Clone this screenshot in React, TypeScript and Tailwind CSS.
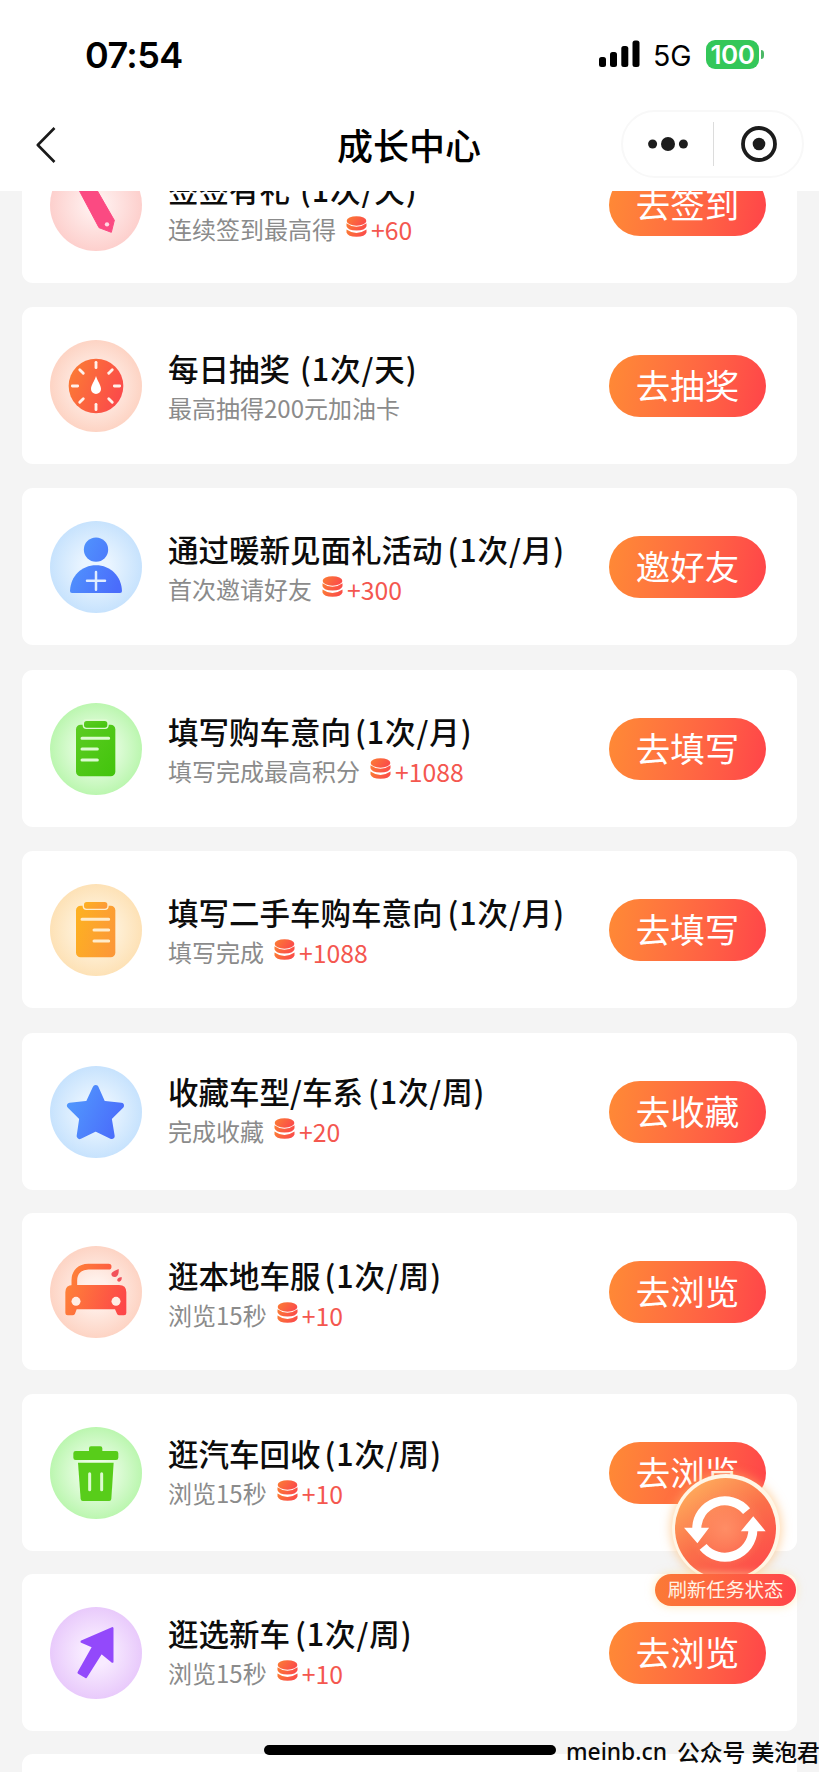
import {ReactNode} from "react";

type Task = {
	icon: ReactNode;
	tint: string;
	name: string;
	freq: string;
	desc: string;
	points?: string;
	action: string;
	gap: string;
	freqGap?: string;
	lift?: string;
};

const PenIcon = () => (
	<g>
		<path d="M64 50 H116 L193 184 L184 220 L147 206 Z" fill="#fb4a82" stroke="#fb4a82" strokeWidth="3" strokeLinejoin="round"/>
		<circle cx="171" cy="196" r="6.5" fill="#ffd9e3"/>
	</g>
);

const DialIcon = () => (
	<g>
		<circle cx="138" cy="138" r="82" fill="url(#warm)"/>
		{[0, 45, 90, 135, 180, 225, 270, 315].map((angle) => (
			<path key={angle} d={angle % 90 ? "M138 69 V84" : "M138 67 V83"} transform={`rotate(${angle} 138 138)`}
						stroke="#fff1ea" strokeWidth="8.5" strokeLinecap="round"/>
		))}
		<path d="M138 108 C142 122 153 136 153 147 A15 15 0 0 1 123 147 C123 136 134 122 138 108 Z" fill="#fff"/>
	</g>
);

const InviteIcon = () => (
	<g>
		<circle cx="138" cy="86" r="36.5" fill="url(#cool)"/>
		<path d="M66 216 Q60 216 60 210 C62 165 95 133 138 133 C181 133 214 165 216 210 Q216 216 210 216 Z" fill="url(#cool)"/>
		<path d="M138 153 V206 M111 179.500 H165" stroke="#e0ecff" strokeWidth="7.5" strokeLinecap="round"/>
	</g>
);

const FormIcon = ({fill, halo, right}: { fill: string, halo: string, right?: boolean }) => (
	<g>
		<rect x="78" y="65" width="118" height="155" rx="14" fill={fill}/>
		<rect x="98" y="48" width="78" height="30" rx="11" fill={halo}/>
		<rect x="102" y="54" width="70" height="20" rx="8" fill={fill}/>
		<path d={right ? "M96 106 H176 M132 138 H176 M132 171 H176" : "M96 106 H176 M96 138 H142 M96 171 H142"}
					stroke={halo} strokeWidth="9" strokeLinecap="round"/>
	</g>
);

const StarIcon = () => (
	<path d="M137 66 L158 113 L213 119 L176 156 L185 210 L137 187 L89 210 L97 156 L60 119 L115 113 Z"
				fill="url(#cool)" stroke="url(#cool)" strokeWidth="18" strokeLinejoin="round"/>
);

const CarIcon = () => (
	<g>
		<path d="M73 122 V103 C73 78 90 62 115 62 H176" fill="none" stroke="url(#car)" strokeWidth="17" strokeLinecap="round"/>
		<path d="M68 117 H207 Q229 117 229 139 V201 Q229 208 222 208 H208 Q203 208 201 203 L195 190 H80 L75 203 Q73 208 67 208 H53 Q46 208 46 201 V139 Q46 117 68 117 Z"
					fill="url(#car)"/>
		<circle cx="78" cy="166" r="13.500" fill="#ffeee6"/>
		<circle cx="198" cy="166" r="13.500" fill="#ffeee6"/>
		<path d="M206 69 C207 80 205 91 196 93 C187 94 182 88 185 81 C188 76 197 73 206 69 Z" fill="#f2525b"/>
		<path d="M215 93 C216 100 214 106 208 107 C202 107 200 102 203 98 C206 95 211 94 215 93 Z" fill="#f2525b"/>
	</g>
);

const TrashIcon = () => (
	<g fill="#58cd1a">
		<path d="M117 72 V64 Q117 58 123 58 H151 Q157 58 157 64 V72 H198 Q205 72 205 79 V92 Q205 99 198 99 H77 Q70 99 70 92 V79 Q70 72 77 72 Z"/>
		<path d="M84 107 H191 L184 216 Q183 222 178 222 H98 Q93 222 92 216 Z"/>
		<path d="M119 140 V188 M155 140 V188" stroke="#dcfbd0" strokeWidth="9" strokeLinecap="round"/>
	</g>
);

const ArrowIcon = () => (
	<path d="M187 64 V164 L154 137 L108 210 L86 197 L130 119 L95 104 Z" fill="#9349fb" stroke="#9349fb" strokeWidth="7"
				strokeLinejoin="round"/>
);

const tasks: Task[] = [
	{
		icon: <PenIcon/>, tint: "bg-[radial-gradient(circle,#fff0ef_10%,#fdcfcc_72%)]", name: "签签有礼", freq: "(1次/天)",
		desc: "连续签到最高得", points: "+60", action: "去签到", gap: "-mt-[65px]", freqGap: "ml-[10px]", lift: "pb-[46px]"
	},
	{
		icon: <DialIcon/>, tint: "bg-[radial-gradient(circle,#fff0ea_20%,#fdd3c3_72%)]", name: "每日抽奖", freq: "(1次/天)",
		desc: "最高抽得200元加油卡", action: "去抽奖", gap: "mt-[24px]", freqGap: "ml-[10px]"
	},
	{
		icon: <InviteIcon/>, tint: "bg-[radial-gradient(circle,#eaf5ff_20%,#c6e2fd_72%)]", name: "通过暖新见面礼活动", freq: "(1次/月)",
		desc: "首次邀请好友", points: "+300", action: "邀好友", gap: "mt-[24px]", freqGap: "ml-[5px]"
	},
	{
		icon: <FormIcon fill="url(#leaf)" halo="#dcfbd0"/>, tint: "bg-[radial-gradient(circle,#eafde5_20%,#baf6ae_72%)]",
		name: "填写购车意向", freq: "(1次/月)", desc: "填写完成最高积分", points: "+1088", action: "去填写", gap: "mt-[25px]"
	},
	{
		icon: <FormIcon fill="url(#amber)" halo="#ffeccb" right/>, tint: "bg-[radial-gradient(circle,#fff4e0_20%,#fde1b5_72%)]",
		name: "填写二手车购车意向", freq: "(1次/月)", desc: "填写完成", points: "+1088", action: "去填写", gap: "mt-[24px]",
		freqGap: "ml-[5px]"
	},
	{
		icon: <StarIcon/>, tint: "bg-[radial-gradient(circle,#eaf5ff_20%,#c6e2fd_72%)]", name: "收藏车型/车系", freq: "(1次/周)",
		desc: "完成收藏", points: "+20", action: "去收藏", gap: "mt-[25px]", freqGap: "ml-[5px]", lift: "pb-[51px]"
	},
	{
		icon: <CarIcon/>, tint: "bg-[radial-gradient(circle,#fff0ea_20%,#fdd3c3_72%)]", name: "逛本地车服", freq: "(1次/周)",
		desc: "浏览15秒", points: "+10", action: "去浏览", gap: "mt-[23px]", lift: "pb-[47px]"
	},
	{
		icon: <TrashIcon/>, tint: "bg-[radial-gradient(circle,#eafde5_20%,#baf6ae_72%)]", name: "逛汽车回收", freq: "(1次/周)",
		desc: "浏览15秒", points: "+10", action: "去浏览", gap: "mt-[24px]", lift: "pb-[50px]"
	},
	{
		icon: <ArrowIcon/>, tint: "bg-[radial-gradient(circle,#f8ebff_20%,#e8c9fb_72%)]", name: "逛选新车", freq: "(1次/周)",
		desc: "浏览15秒", points: "+10", action: "去浏览", gap: "mt-[23px]", freqGap: "ml-[5px]", lift: "pb-[50px]"
	},
];

const Gradients = () => (
	<svg className="absolute size-0" aria-hidden="true">
		<defs>
			<linearGradient id="warm" x1="0" y1="0.3" x2="1" y2="0.7">
				<stop stopColor="#fb7a35"/>
				<stop offset="1" stopColor="#fb484b"/>
			</linearGradient>
			<linearGradient id="car" gradientUnits="userSpaceOnUse" x1="46" y1="110" x2="229" y2="170">
				<stop stopColor="#fe8338"/>
				<stop offset="1" stopColor="#fd4649"/>
			</linearGradient>
			<linearGradient id="cool" gradientUnits="userSpaceOnUse" x1="60" y1="100" x2="216" y2="170">
				<stop stopColor="#5197fd"/>
				<stop offset="1" stopColor="#4a6cfb"/>
			</linearGradient>
			<linearGradient id="leaf" x1="0" y1="0" x2="1" y2="1">
				<stop stopColor="#5ccc22"/>
				<stop offset="1" stopColor="#42c40c"/>
			</linearGradient>
			<linearGradient id="amber" x1="0" y1="0.3" x2="1" y2="0.7">
				<stop stopColor="#fdb022"/>
				<stop offset="1" stopColor="#fc9838"/>
			</linearGradient>
		</defs>
	</svg>
);

const Coins = () => (
	<svg viewBox="0 0 63 64" className="w-[21px] h-[21px] shrink-0 mb-[6px] ml-[10px] mr-[4px]">
		<ellipse cx="31.500" cy="15" rx="30" ry="14.500" fill="url(#warm)"/>
		<path d="M1 22 Q31 44 62 22 V31 Q58 44 31.500 44 Q5 44 1 31 Z" fill="url(#warm)"/>
		<path d="M1 41 Q31 62 62 41 V50 Q58 63 31.500 63 Q5 63 1 50 Z" fill="url(#warm)"/>
	</svg>
);

function TaskCard({icon, tint, name, freq, desc, points, action, gap, freqGap = "ml-[4px]", lift = "pb-[48px]"}: Task) {
	return (
		<li className={`flex h-[157px] w-[775px] shrink-0 rounded-[11px] bg-white pl-[28px] pr-[31px] ${gap}`}>
			<div className={`size-[92px] shrink-0 self-center rounded-full ${tint}`}>
				<svg viewBox="0 0 276 276" className="size-full">{icon}</svg>
			</div>
			<div className={`ml-[26px] flex flex-1 flex-col justify-end whitespace-nowrap ${lift}`}>
				<div className="flex h-[40px] items-center text-[30.500px] font-medium leading-[40px] text-[#0c0c0c]">
					<span>{name}</span>
					<span className={`tracking-[0.9px] ${freqGap}`}>{freq}</span>
				</div>
				<div className="flex h-[40px] items-center -mb-[12px] text-[24px] leading-[40px] text-[#8b8b8b]">
					<span>{desc}</span>
					{points && (
						<>
							<Coins/>
							<span className="text-[24.800px] text-[#f4574f]">{points}</span>
						</>
					)}
				</div>
			</div>
			<button className="h-[62px] w-[157px] shrink-0 self-center rounded-full bg-linear-100 from-[#ff8a35] to-[#ff4349] pb-[4px] text-[34.500px] leading-[58px] text-white">
				{action}
			</button>
		</li>
	);
}

const StatusBar = () => (
	<div className="flex h-[110px] items-start pl-[85px] pt-[34px] font-['Inter',sans-serif]">
		<div className="w-[514px] text-[36px] font-semibold leading-[42px] tracking-[-0.600px] text-black">07:54</div>
		<svg viewBox="0 0 41 28" className="mt-[6px] h-[28px] w-[41px]">
			<rect x="0" y="17" width="7" height="10" rx="2.500"/>
			<rect x="11" y="12" width="7" height="15" rx="2.500"/>
			<rect x="22.300" y="6" width="7" height="21" rx="2.500"/>
			<rect x="33.500" y="0.500" width="7" height="26.500" rx="2.500"/>
		</svg>
		<div className="ml-[13px] w-[53px] text-[28.500px] leading-[44px] text-black">5G</div>
		<div className="mt-[6px] flex h-[29px] w-[53px] items-center justify-center rounded-[9px] bg-[#34c759] text-[26px] font-semibold leading-[29px] tracking-[-0.500px] text-white">
			100
		</div>
		<div className="ml-[2px] mt-[16px] h-[9px] w-[3px] rounded-r-full bg-[#4bb866]"/>
	</div>
);

const NavBar = () => (
	<div className="flex h-[81px] items-start pl-[36px] pr-[15px]">
		<svg viewBox="0 0 20 36" className="mt-[16.500px] h-[36px] w-[20px]">
			<path d="M18.500 1 L1.800 18 L18.500 35" fill="none" stroke="#1a1a1a" strokeWidth="2.600" strokeLinejoin="round"/>
		</svg>
		<h1 className="ml-[281px] mt-[9px] w-[284px] text-[36px] font-medium leading-[50px] text-black">成长中心</h1>
		<div className="flex h-[68px] w-[183px] items-center rounded-full border-2 border-[#f8f8f8]">
			<svg viewBox="0 0 40 14" className="ml-[25px] h-[14px] w-[40px] fill-[#1c1c1c]">
				<circle cx="4.600" cy="7" r="4.500"/>
				<circle cx="20" cy="7" r="7"/>
				<circle cx="35.400" cy="7" r="4.500"/>
			</svg>
			<div className="ml-[25px] h-[44px] w-px bg-[#dcdcdc]"/>
			<svg viewBox="0 0 36 36" className="ml-[27px] size-[36px]">
				<circle cx="18" cy="18" r="16" fill="none" stroke="#1c1c1c" strokeWidth="3.800"/>
				<circle cx="18" cy="18" r="6.300" fill="#1c1c1c"/>
			</svg>
		</div>
	</div>
);

const RefreshFloat = () => (
	<div className="absolute left-[655px] top-[1474px] flex w-[141px] flex-col items-center">
		<div className="size-[108px] rounded-full bg-[#fff6e6] p-[3.500px] shadow-[0_0_10px_2px_#ffb56480]">
			<div className="size-full rounded-full bg-[radial-gradient(circle_at_50%_50%,#ff8d65_0%,#ff8d6500_55%),linear-gradient(145deg,#ffb45e_5%,#fb6f4a_50%,#fd4a4a_90%)]">
				<svg viewBox="106 54 302 302" className="size-full">
					<path d="M320 153 A84 84 0 0 0 171 206 M190 260 A84 84 0 0 0 339 208" fill="none" stroke="#fff" strokeWidth="27"/>
					<path d="M133 203 H208 L173 249 Z M303 213 H377 L340 168 Z" fill="#fff"/>
				</svg>
			</div>
		</div>
		<div className="-mt-[8px] h-[32px] w-[141px] rounded-full bg-linear-to-r from-[#fb7a35] to-[#ff4349] text-center text-[19.300px] leading-[30px] text-[#fff3e6] shadow-[0_0_8px_1px_#ffdf9a90]">
			刷新任务状态
		</div>
	</div>
);

export default function App() {
	return (
		<div className="relative flex h-[1772px] w-[819px] flex-col overflow-hidden bg-[#f4f4f4] font-['Noto_Sans_CJK_SC',sans-serif]">
			<Gradients/>
			<header className="z-10 h-[191px] shrink-0 bg-white">
				<StatusBar/>
				<NavBar/>
			</header>
			<main className="flex-1 overflow-hidden">
				<ul className="flex flex-col pl-[22px]">
					{tasks.map((task) => (
						<TaskCard key={task.name} {...task}/>
					))}
					<li className="mt-[23px] h-[157px] w-[775px] shrink-0 rounded-[11px] bg-white"/>
				</ul>
			</main>
			<RefreshFloat/>
			<div className="absolute left-[264px] top-[1745px] h-[10px] w-[292px] rounded-full bg-black"/>
			<div className="absolute left-[566px] top-[1735px] flex whitespace-nowrap text-[22.800px] font-medium leading-[34px] text-[#0a0a0a]">
				<span className="w-[111px] font-['Noto_Sans',sans-serif]">meinb.cn</span>
				<span className="w-[74.500px]">公众号</span>
				<span>美泡君</span>
			</div>
		</div>
	);
}
